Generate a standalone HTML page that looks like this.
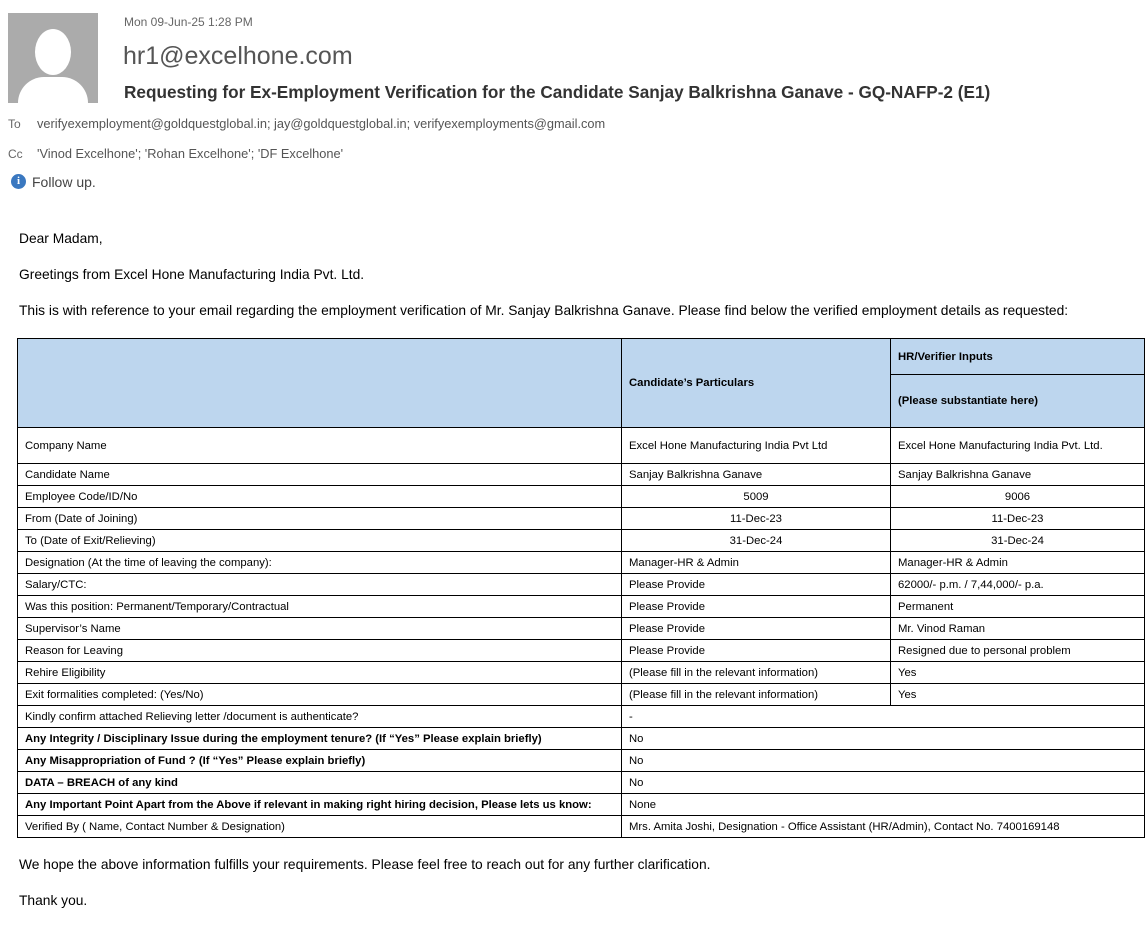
<!DOCTYPE html>
<html><head><meta charset="utf-8"><style>
body{margin:0;background:#fff;font-family:"Liberation Sans",sans-serif;color:#000;width:1148px;height:941px;overflow:hidden;position:relative}
.a{position:absolute;white-space:nowrap}
table{position:absolute;left:17px;top:338px;border-collapse:collapse;font-size:11.3px;table-layout:fixed}
td{border:1px solid #000;padding:0 7px;height:21px;white-space:nowrap;overflow:hidden}
.c{text-align:center}
.h{background:#bdd6ee;font-weight:bold}
b{font-weight:bold}
.p{font-size:13.8px}
</style></head><body>
<div class="a" style="left:8px;top:13px;width:90px;height:90px;background:#ababab;overflow:hidden">
<div style="position:absolute;left:27px;top:16px;width:36px;height:46px;border-radius:50%;background:#fff"></div>
<div style="position:absolute;left:10px;top:64px;width:70px;height:50px;border-radius:26px 26px 0 0;background:#fff"></div>
</div>
<div class="a" style="left:124px;top:15px;font-size:12px;color:#666">Mon 09-Jun-25 1:28 PM</div>
<div class="a" style="left:123px;top:42px;font-size:25px;color:#555">hr1@excelhone.com</div>
<div class="a" style="left:124px;top:82px;font-size:17.2px;color:#333;font-weight:bold">Requesting for Ex-Employment Verification for the Candidate Sanjay Balkrishna Ganave - GQ-NAFP-2 (E1)</div>
<div class="a" style="left:8px;top:117px;font-size:12px;color:#666">To</div>
<div class="a" style="left:37px;top:116px;font-size:12.8px;color:#555">verifyexemployment@goldquestglobal.in; jay@goldquestglobal.in; verifyexemployments@gmail.com</div>
<div class="a" style="left:8px;top:147px;font-size:12px;color:#666">Cc</div>
<div class="a" style="left:37px;top:146px;font-size:12.8px;color:#555">'Vinod Excelhone'; 'Rohan Excelhone'; 'DF Excelhone'</div>
<div class="a" style="left:11px;top:174px;width:15px;height:15px;border-radius:50%;background:#3a78c0;color:#fff;font-size:11px;font-weight:bold;text-align:center;line-height:15px;font-family:'Liberation Serif',serif">i</div>
<div class="a" style="left:32px;top:174px;font-size:14px;color:#444">Follow up.</div>
<div class="a p" style="left:19px;top:231px">Dear Madam,</div>
<div class="a p" style="left:19px;top:267px">Greetings from Excel Hone Manufacturing India Pvt. Ltd.</div>
<div class="a p" style="left:19px;top:303px">This is with reference to your email regarding the employment verification of Mr. Sanjay Balkrishna Ganave. Please find below the verified employment details as requested:</div>
<table>
<colgroup><col style="width:604px"><col style="width:269px"><col style="width:254px"></colgroup>
<tr><td class="h" rowspan="2" style="height:88px"></td><td class="h" rowspan="2">Candidate’s Particulars</td><td class="h" style="height:35px">HR/Verifier Inputs</td></tr>
<tr><td class="h" style="height:52px">(Please substantiate here)</td></tr>
<tr><td style="height:35px">Company Name</td><td>Excel Hone Manufacturing India Pvt Ltd</td><td>Excel Hone Manufacturing India Pvt. Ltd.</td></tr>
<tr><td>Candidate Name</td><td>Sanjay Balkrishna Ganave</td><td>Sanjay Balkrishna Ganave</td></tr>
<tr><td>Employee Code/ID/No</td><td class="c">5009</td><td class="c">9006</td></tr>
<tr><td>From (Date of Joining)</td><td class="c">11-Dec-23</td><td class="c">11-Dec-23</td></tr>
<tr><td>To (Date of Exit/Relieving)</td><td class="c">31-Dec-24</td><td class="c">31-Dec-24</td></tr>
<tr><td>Designation (At the time of leaving the company):</td><td>Manager-HR &amp; Admin</td><td>Manager-HR &amp; Admin</td></tr>
<tr><td>Salary/CTC:</td><td>Please Provide</td><td>62000/- p.m. / 7,44,000/- p.a.</td></tr>
<tr><td>Was this position: Permanent/Temporary/Contractual</td><td>Please Provide</td><td>Permanent</td></tr>
<tr><td>Supervisor’s Name</td><td>Please Provide</td><td>Mr. Vinod Raman</td></tr>
<tr><td>Reason for Leaving</td><td>Please Provide</td><td>Resigned due to personal problem</td></tr>
<tr><td>Rehire Eligibility</td><td>(Please fill in the relevant information)</td><td>Yes</td></tr>
<tr><td>Exit formalities completed: (Yes/No)</td><td>(Please fill in the relevant information)</td><td>Yes</td></tr>
<tr><td>Kindly confirm attached Relieving letter /document is authenticate?</td><td colspan="2">-</td></tr>
<tr><td><b>Any Integrity / Disciplinary Issue during the employment tenure? (If “Yes” Please explain briefly)</b></td><td colspan="2">No</td></tr>
<tr><td><b>Any Misappropriation of Fund ? (If “Yes” Please explain briefly)</b></td><td colspan="2">No</td></tr>
<tr><td><b>DATA – BREACH of any kind</b></td><td colspan="2">No</td></tr>
<tr><td><b>Any Important Point Apart from the Above if relevant in making right hiring decision, Please lets us know:</b></td><td colspan="2">None</td></tr>
<tr><td>Verified By ( Name, Contact Number &amp; Designation)</td><td colspan="2">Mrs. Amita Joshi, Designation - Office Assistant (HR/Admin), Contact No. 7400169148</td></tr>
</table>
<div class="a p" style="left:19px;top:857px">We hope the above information fulfills your requirements. Please feel free to reach out for any further clarification.</div>
<div class="a p" style="left:19px;top:893px">Thank you.</div>
</body></html>
